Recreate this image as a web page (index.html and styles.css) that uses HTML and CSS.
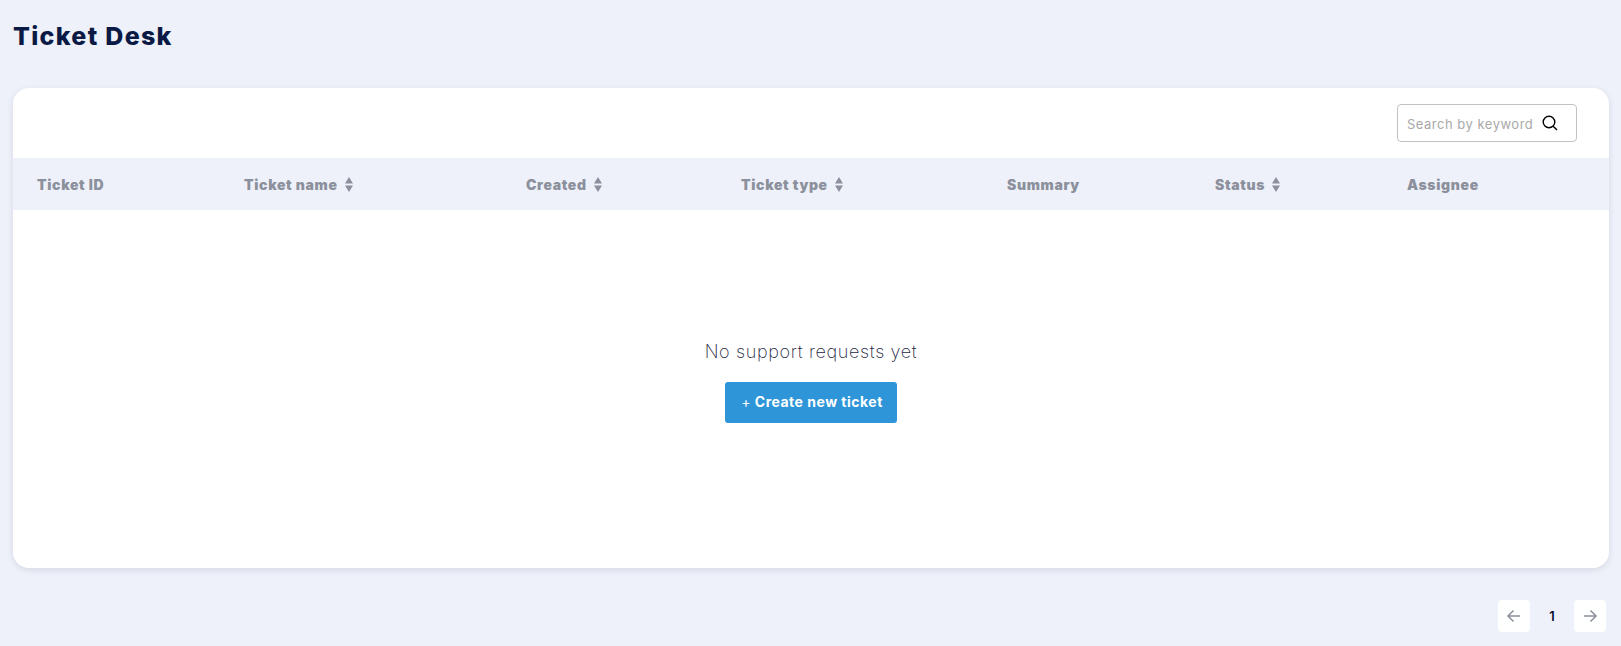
FILE: index.html
```html
<!DOCTYPE html>
<html lang="en">
<head>
    <meta charset="UTF-8">
    <meta name="viewport" content="width=device-width, initial-scale=1.0">
    <title>Ticket Desk</title>
    <link rel="stylesheet" href="styles.css">
</head>
<body>
    <h1 class="page-title">Ticket Desk</h1>

    <div class="card">
        <div class="toolbar">
            <div class="search">
                <span class="search-text">Search by keyword</span>
                <svg class="search-icon" viewBox="0 0 16 16" width="16" height="16">
                    <circle cx="7" cy="7" r="5.8" fill="none" stroke="#000" stroke-width="1.4"/>
                    <path d="M11.2 11.2 L15 15" stroke="#000" stroke-width="1.4" fill="none"/>
                </svg>
            </div>
        </div>

        <div class="table-head">
            <div class="col">Ticket ID</div>
            <div class="col">Ticket name <svg class="sort" viewBox="0 0 8 15" width="8" height="15"><path d="M4 0 L8 6.5 H0 Z M0 8.5 H8 L4 15 Z"/></svg></div>
            <div class="col">Created <svg class="sort" viewBox="0 0 8 15" width="8" height="15"><path d="M4 0 L8 6.5 H0 Z M0 8.5 H8 L4 15 Z"/></svg></div>
            <div class="col">Ticket type <svg class="sort" viewBox="0 0 8 15" width="8" height="15"><path d="M4 0 L8 6.5 H0 Z M0 8.5 H8 L4 15 Z"/></svg></div>
            <div class="col">Summary</div>
            <div class="col">Status <svg class="sort" viewBox="0 0 8 15" width="8" height="15"><path d="M4 0 L8 6.5 H0 Z M0 8.5 H8 L4 15 Z"/></svg></div>
            <div class="col">Assignee</div>
        </div>

        <div class="empty">
            <p class="empty-text">No support requests yet</p>
            <button class="create-btn"><span class="plus">+</span> Create new ticket</button>
        </div>
    </div>

    <div class="pagination">
        <a class="page-btn">
            <svg viewBox="0 0 16 16" width="16" height="16"><path d="M14 8 H2 M7.5 2.5 L2 8 L7.5 13.5" fill="none" stroke="#8b909c" stroke-width="1.5"/></svg>
        </a>
        <span class="page-num">1</span>
        <a class="page-btn">
            <svg viewBox="0 0 16 16" width="16" height="16"><path d="M2 8 H14 M8.5 2.5 L14 8 L8.5 13.5" fill="none" stroke="#8b909c" stroke-width="1.5"/></svg>
        </a>
    </div>
</body>
</html>
```

FILE: styles.css
```css
html, body { height: 100%; }
body { margin: 0; padding: 0 12px 0 13px; background-color: #eef1f9; font-family: Inter, "Noto Sans", sans-serif; overflow: hidden; }

.page-title { margin: 0; height: 88px; padding-top: 21px; box-sizing: border-box; font-size: 25px; line-height: 30px; font-weight: 800; color: #0a1a44; letter-spacing: 1.3px; }

.card { height: 480px; background: white; border-radius: 16px; box-shadow: 0 2px 6px rgba(40,50,90,0.12); overflow: hidden; }

.toolbar { height: 70px; display: flex; justify-content: flex-end; align-items: flex-start; padding: 16px 32px 0 0; box-sizing: border-box; }
.search { width: 180px; height: 38px; box-sizing: border-box; border: 1px solid #c2c2c2; border-radius: 4px; display: flex; align-items: center; padding-left: 9px; }
.search-text { font-size: 13px; color: #a9a9a9; width: 135px; padding-top: 1px; white-space: nowrap; letter-spacing: 0.5px; }

.table-head { height: 52px; background: #eef1f9; display: grid; grid-template-columns: 231px 282px 215px 266px 208px 192px 1fr; align-items: center; }
.col { font-size: 14px; font-weight: 900; color: #8b909c; white-space: nowrap; display: flex; align-items: center; gap: 7px; letter-spacing: 0.65px; }
.col:first-child { padding-left: 24px; }
.sort { fill: #8b909c; }

.empty { display: flex; flex-direction: column; align-items: center; padding-top: 130px; }
.empty-text { margin: 0 0 18px 0; font-size: 18px; line-height: 24px; font-weight: 200; color: #1c2540; letter-spacing: 0.65px; }
.create-btn { width: 172px; height: 41px; border: none; border-radius: 3px; background: #2e96d8; color: white; font-family: inherit; font-size: 14px; font-weight: 700; letter-spacing: 0.5px; padding-bottom: 3px; padding-left: 8px; }
.plus { font-weight: 400; }

.pagination { display: flex; justify-content: flex-end; align-items: center; margin-top: 32px; padding-right: 3px; }
.page-btn { width: 32px; height: 32px; background: white; border-radius: 4px; display: flex; align-items: center; justify-content: center; }
.page-num { width: 44px; text-align: center; font-size: 13px; font-weight: 600; color: #0a0f2a; }
```
